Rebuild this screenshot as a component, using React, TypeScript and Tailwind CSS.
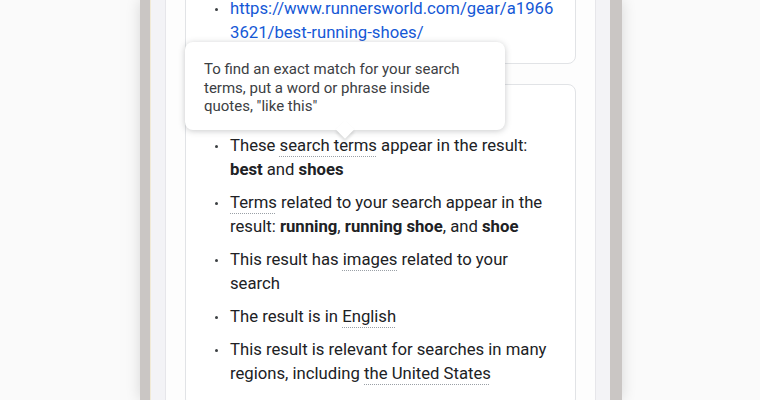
import type { ReactNode } from 'react';

const Term = ({ children }: { children: ReactNode }) => (
  <span className="underline decoration-dotted decoration-[#9aa0a6] decoration-1 underline-offset-[5px]">
    {children}
  </span>
);

const Item = ({ children }: { children: ReactNode }) => (
  <li className="flex">
    <span className="flex h-6 w-6 shrink-0 items-center justify-center pr-[3px]">
      <span className="h-[3px] w-[3px] rounded-full bg-[#3c4043]" />
    </span>
    <span className="min-w-0 flex-1">{children}</span>
  </li>
);

const App = () => {
  return (
    <div
      className="h-[400px] w-[760px] overflow-hidden bg-[#fafafa] pl-[140px]"
      style={{ fontFamily: 'Roboto, "Liberation Sans", Arial, sans-serif' }}
    >
      {/* phone frame */}
      <div className="flex h-full w-[482px] border-l-[10px] border-r-[12px] border-[#cac6c4] shadow-[0_0_14px_rgba(0,0,0,0.14)]">
        <div className="flex h-full flex-1 border-l border-[#f1ead6] bg-[#f3f3f6] px-[14px]">
          <div className="relative h-full flex-1 border-x border-[#e6e6ea] bg-[#fdfdfd] px-[19px]">
            <div className="flex flex-col gap-5 text-[16.7px] leading-6 text-[#202124]">
              {/* top card, scrolled partly out of view */}
              <div className="-mt-6 rounded-lg border border-[#e1e3e6] bg-white px-5 pb-[18px] pt-5">
                <ul>
                  <Item>
                    <a className="break-all text-[#1558d6]">
                      https://www.runnersworld.com/gear/a19663621/best-running-shoes/
                    </a>
                  </Item>
                </ul>
              </div>

              {/* second card */}
              <div className="rounded-lg border border-[#e1e3e6] bg-white px-5 pb-5 pt-[49px]">
                <ul className="flex flex-col gap-[9px]">
                  <Item>
                    These <Term>search terms</Term> appear in the result: <b className="font-bold">best</b> and{' '}
                    <b className="font-bold">shoes</b>
                  </Item>
                  <Item>
                    <Term>Terms</Term> related to your search appear in the result:{' '}
                    <b className="font-bold">running</b>, <b className="font-bold">running shoe</b>, and{' '}
                    <b className="font-bold">shoe</b>
                  </Item>
                  <Item>
                    This result has <Term>images</Term> related to your search
                  </Item>
                  <Item>
                    The result is in <Term>English</Term>
                  </Item>
                  <Item>
                    This result is relevant for searches in many regions, including <Term>the United States</Term>
                  </Item>
                </ul>
              </div>
            </div>

            {/* tooltip */}
            <div className="absolute left-[19px] top-[42px] w-[320px] rounded-lg bg-white pb-[14px] pl-[19px] pr-[30px] pt-[18px] text-[15px] leading-[18.5px] text-[#3c4043] shadow-[0_1px_6px_rgba(60,64,67,0.28)]">
              To find an exact match for your search terms, put a word or phrase inside quotes, "like this"
              <div className="absolute -bottom-[6px] left-1/2 h-[13px] w-[13px] -translate-x-1/2 rotate-45 bg-white shadow-[2px_2px_3px_rgba(60,64,67,0.18)]" />
            </div>
          </div>
        </div>
      </div>
    </div>
  );
};

export default App;
